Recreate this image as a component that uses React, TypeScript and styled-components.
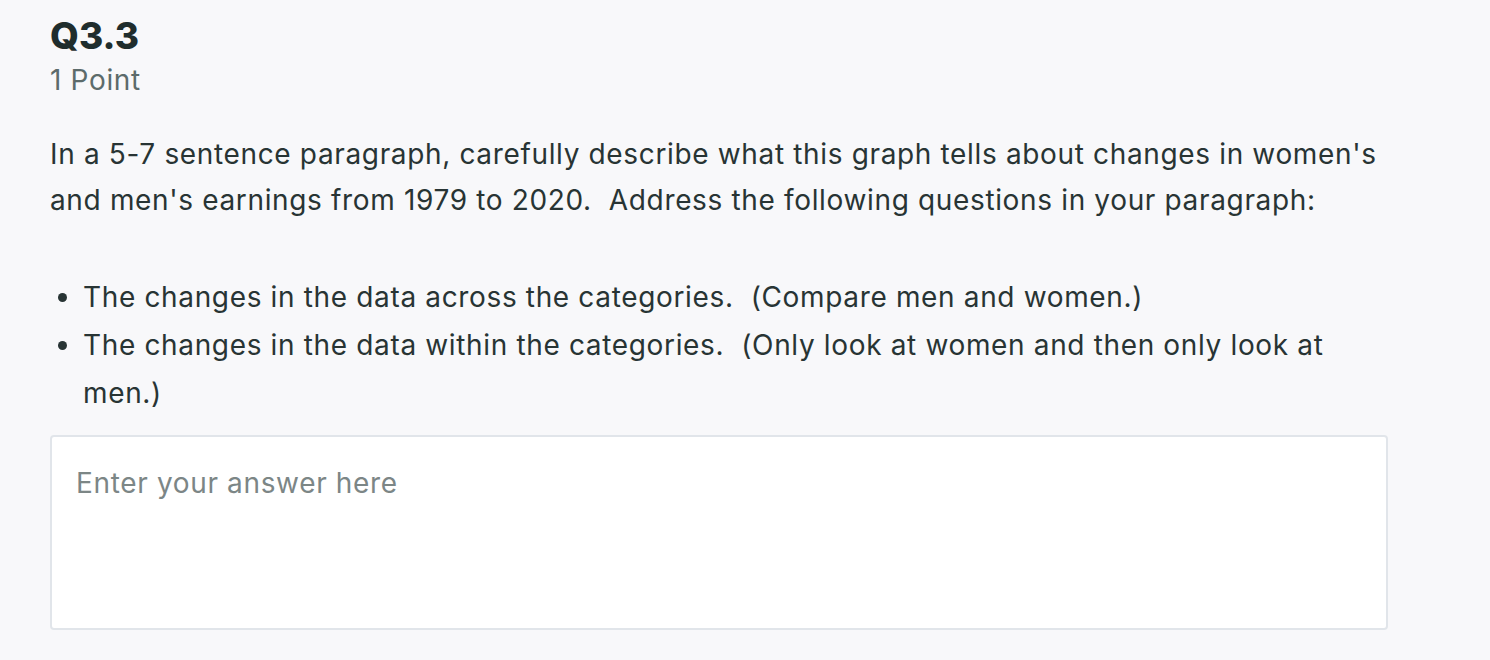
import styled, { createGlobalStyle } from 'styled-components'

const GlobalStyle = createGlobalStyle`
  html, body {
    margin: 0;
    padding: 0;
    background: #f8f8fa;
  }
  body {
    font-family: Inter, Lato, sans-serif;
    color: #283434;
  }
`

const Page = styled.div`
  width: 1490px;
  height: 660px;
  box-sizing: border-box;
  padding: 12px 0 0 50px;
  overflow: hidden;
`

const Question = styled.section`
  width: 1338px;
  font-size: 28px;
  letter-spacing: 0.65px;
`

const Title = styled.h1`
  margin: 0;
  font-size: 37px;
  line-height: 48px;
  font-weight: 800;
  letter-spacing: 0;
  color: #1f2d2d;
`

const Points = styled.div`
  line-height: 40px;
  color: #5c6b6b;
`

const Prompt = styled.p`
  margin: 31px 0 0;
  line-height: 46px;
`

const Bullets = styled.ul`
  margin: 50px 0 0;
  padding: 0 0 0 33px;
  line-height: 48px;
`

const Bullet = styled.li`
  padding-left: 0;
`

const Answer = styled.textarea`
  display: block;
  box-sizing: border-box;
  width: 1338px;
  height: 195px;
  margin-top: 18px;
  padding: 28px 24px;
  border: 2px solid #e1e5ea;
  border-radius: 4px;
  background: #fff;
  font-family: inherit;
  font-size: 28px;
  letter-spacing: 0.65px;
  line-height: 36px;
  color: #283434;
  resize: none;
  outline: none;

  &::placeholder {
    color: #7c8686;
  }
`

export default function App() {
  return (
    <Page>
      <GlobalStyle />
      <Question>
        <Title>Q3.3</Title>
        <Points>1 Point</Points>
        <Prompt>
          In a 5-7 sentence paragraph, carefully describe what this graph tells about changes in women's and
          men's earnings from 1979 to 2020.&nbsp; Address the following questions in your paragraph:
        </Prompt>
        <Bullets>
          <Bullet>The changes in the data across the categories.&nbsp; (Compare men and women.)</Bullet>
          <Bullet>
            The changes in the data within the categories.&nbsp; (Only look at women and then only look at men.)
          </Bullet>
        </Bullets>
        <Answer placeholder="Enter your answer here" />
      </Question>
    </Page>
  )
}
